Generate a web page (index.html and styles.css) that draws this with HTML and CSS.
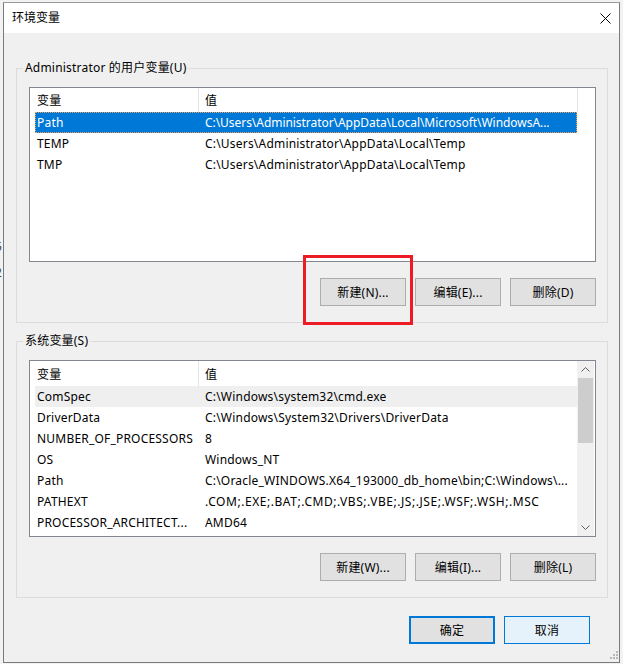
FILE: index.html
```html
<!DOCTYPE html>
<html lang="zh-CN">
<head>
<meta charset="utf-8">
<title>环境变量</title>
<link rel="stylesheet" href="styles.css">
</head>
<body>
<div class="desk">
  <div class="edge">
    <span class="frag frag-1">5</span>
    <span class="frag frag-2">2</span>
    <span class="frag frag-3">]</span>
    <span class="frag frag-4">(</span>
  </div>
  <div class="window">
    <div class="titlebar">
      <span class="title">环境变量</span>
      <svg class="close" width="11" height="11" viewBox="0 0 11 11"><path d="M0.5 0.5 L10.5 10.5 M10.5 0.5 L0.5 10.5" stroke="#000" stroke-width="1" fill="none"/></svg>
    </div>
    <div class="client">
      <div class="group group-user">
        <span class="legend">Administrator 的用户变量(U)</span>
        <div class="list list-user">
          <div class="list-main">
            <div class="head">
              <div class="hc hc1">变量</div>
              <div class="hc hc2">值</div>
              <div class="hc hc3"></div>
            </div>
            <div class="row sel"><div class="c1">Path</div><div class="c2 fit">C:\Users\Administrator\AppData\Local\Microsoft\WindowsA...</div></div>
            <div class="row"><div class="c1">TEMP</div><div class="c2">C:\Users\Administrator\AppData\Local\Temp</div></div>
            <div class="row"><div class="c1">TMP</div><div class="c2">C:\Users\Administrator\AppData\Local\Temp</div></div>
          </div>
        </div>
        <div class="btns">
          <div class="btn-wrap">
            <button class="btn">新建(N)...</button>
            <div class="mark"></div>
          </div>
          <button class="btn">编辑(E)...</button>
          <button class="btn">删除(D)</button>
        </div>
      </div>
      <div class="group group-sys">
        <span class="legend">系统变量(S)</span>
        <div class="list list-sys">
          <div class="list-main">
            <div class="head">
              <div class="hc hc1">变量</div>
              <div class="hc hc2">值</div>
            </div>
            <div class="row hot"><div class="c1">ComSpec</div><div class="c2">C:\Windows\system32\cmd.exe</div></div>
            <div class="row"><div class="c1">DriverData</div><div class="c2">C:\Windows\System32\Drivers\DriverData</div></div>
            <div class="row"><div class="c1">NUMBER_OF_PROCESSORS</div><div class="c2">8</div></div>
            <div class="row"><div class="c1">OS</div><div class="c2">Windows_NT</div></div>
            <div class="row"><div class="c1">Path</div><div class="c2">C:\Oracle_WINDOWS.X64_193000_db_home\bin;C:\Windows\...</div></div>
            <div class="row"><div class="c1">PATHEXT</div><div class="c2 wide">.COM;.EXE;.BAT;.CMD;.VBS;.VBE;.JS;.JSE;.WSF;.WSH;.MSC</div></div>
            <div class="row"><div class="c1">PROCESSOR_ARCHITECT...</div><div class="c2">AMD64</div></div>
          </div>
          <div class="scrollbar">
            <div class="sb-btn"><svg width="9" height="5" viewBox="0 0 9 5"><path d="M0.5 4.5 L4.5 0.5 L8.5 4.5" stroke="#606060" fill="none"/></svg></div>
            <div class="sb-thumb"></div>
            <div class="sb-track"></div>
            <div class="sb-btn"><svg width="9" height="5" viewBox="0 0 9 5"><path d="M0.5 0.5 L4.5 4.5 L8.5 0.5" stroke="#606060" fill="none"/></svg></div>
          </div>
        </div>
        <div class="btns">
          <button class="btn">新建(W)...</button>
          <button class="btn">编辑(I)...</button>
          <button class="btn">删除(L)</button>
        </div>
      </div>
      <div class="footer">
        <button class="btn btn-default">确定</button>
        <button class="btn btn-hover">取消</button>
      </div>
    </div>
    <svg class="grip" width="8" height="8" viewBox="0 0 8 8">
      <rect x="6" y="0" width="2" height="2" fill="#b8b8b8"/>
      <rect x="3" y="3" width="2" height="2" fill="#b8b8b8"/>
      <rect x="6" y="3" width="2" height="2" fill="#b8b8b8"/>
      <rect x="0" y="6" width="2" height="2" fill="#b8b8b8"/>
      <rect x="3" y="6" width="2" height="2" fill="#b8b8b8"/>
      <rect x="6" y="6" width="2" height="2" fill="#b8b8b8"/>
    </svg>
  </div>
</div>
</body>
</html>
```
FILE: styles.css
```css
html, body {
  margin: 0;
  padding: 0;
}
body {
  background: #f2f2f2;
  font-family: "Noto Sans", "Noto Sans CJK SC", sans-serif;
  font-size: 12px;
  letter-spacing: 0.2px;
  color: #000;
  overflow: hidden;
}
.desk {
  display: flex;
  padding-top: 2px;
  height: 664px;
  box-sizing: border-box;
}
.edge {
  width: 3px;
  flex: none;
  overflow: hidden;
  display: flex;
  flex-direction: column;
}
.frag {
  display: block;
  height: 14px;
  line-height: 14px;
  margin-left: -5px;
  color: #444;
  font-size: 12px;
}
.frag-1 { margin-top: 238px; }
.frag-2 { margin-top: 12px; }
.frag-3 { margin-top: 12px; }
.frag-4 { margin-top: 308px; }

.window {
  width: 617px;
  height: 661px;
  box-sizing: border-box;
  border: 1px solid #7a7a7a;
  border-top-color: #9a9a9a;
  background: #f0f0f0;
  position: relative;
  display: flex;
  flex-direction: column;
  flex: none;
}
.titlebar {
  height: 30px;
  flex: none;
  background: #fff;
  display: flex;
  align-items: center;
  justify-content: space-between;
  padding: 0 8px 0 8px;
}
.title {
  line-height: 16px;
  letter-spacing: 0;
}
.close {
  display: block;
  margin-top: 1px;
}
.client {
  flex: 1;
  padding: 0 11px 0 12px;
  display: flex;
  flex-direction: column;
}
.group {
  border: 1px solid #dcdcdc;
  position: relative;
  padding: 18px 11px 16px 12px;
}
.group-user {
  margin-top: 35px;
}
.group-sys {
  margin-top: 18px;
}
.legend {
  position: absolute;
  left: 6px;
  top: -9px;
  padding: 0 2px;
  line-height: 16px;
  background: #f0f0f0;
}
.list {
  border: 1px solid #828790;
  background: #fff;
  display: flex;
  overflow: hidden;
  box-sizing: border-box;
}
.list-user {
  height: 175px;
}
.list-sys {
  height: 177px;
  padding-right: 1px;
}
.list-main {
  flex: 1;
  min-width: 0;
  overflow: hidden;
}
.head {
  display: flex;
  height: 24px;
}
.list-sys .head {
  height: 25px;
}
.hc {
  box-sizing: border-box;
  flex: none;
  display: flex;
  align-items: center;
  border-right: 1px solid #e5e5e5;
}
.hc1 {
  width: 169px;
  padding-left: 7px;
}
.hc2 {
  width: 379px;
  padding-left: 6px;
}
.hc3 {
  flex: 1;
  border-right: 0;
}
.row {
  display: flex;
  align-items: center;
  height: 21px;
  width: 542px;
  margin-left: 5px;
  white-space: nowrap;
}
.c1 {
  width: 163px;
  flex: none;
  box-sizing: border-box;
  padding-left: 2px;
  overflow: hidden;
}
.c2 {
  width: 379px;
  flex: none;
  box-sizing: border-box;
  padding-left: 7px;
  overflow: hidden;
}
.c2.fit {
  letter-spacing: -0.05px;
}
.c2.wide {
  letter-spacing: 0.55px;
}
.row.sel {
  background: #0078d7;
  color: #fff;
  outline: 1px dotted #f2a25a;
  outline-offset: -1px;
}
.row.hot {
  background: #efefef;
}
.scrollbar {
  width: 17px;
  flex: none;
  background: #f0f0f0;
  display: flex;
  flex-direction: column;
}
.sb-btn {
  height: 17px;
  flex: none;
  display: flex;
  align-items: center;
  justify-content: center;
}
.sb-btn svg {
  display: block;
}
.sb-thumb {
  height: 65px;
  flex: none;
  margin: 0 1px;
  background: #cdcdcd;
}
.sb-track {
  flex: 1;
}
.btns {
  display: flex;
  justify-content: flex-end;
  gap: 9px;
  margin-top: 16px;
}
.btn {
  width: 86px;
  height: 28px;
  box-sizing: border-box;
  border: 1px solid #adadad;
  background: #e1e1e1;
  font: inherit;
  letter-spacing: 0.2px;
  color: #000;
  padding: 0;
  margin: 0;
  border-radius: 0;
  display: block;
}
.btn-wrap {
  position: relative;
  display: flex;
}
.mark {
  position: absolute;
  left: -17px;
  top: -23px;
  width: 110px;
  height: 70px;
  box-sizing: border-box;
  border: 3px solid #ed1c24;
  pointer-events: none;
}
.footer {
  display: flex;
  justify-content: flex-end;
  gap: 9px;
  margin-top: 18px;
  margin-right: 18px;
}
.btn-default {
  border: 2px solid #0078d7;
}
.btn-hover {
  border-color: #0078d7;
  background: #e5f1fb;
}
.grip {
  position: absolute;
  right: 1px;
  bottom: 3px;
  display: block;
}
```
